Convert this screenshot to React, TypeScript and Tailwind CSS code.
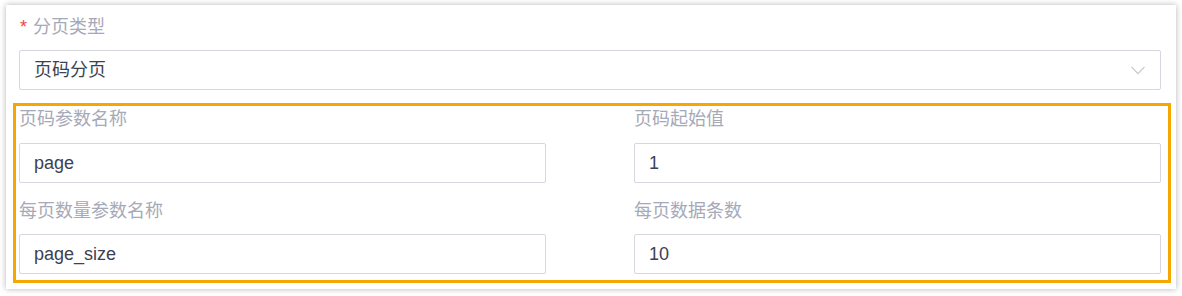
import React from "react"

const font = { fontFamily: '"Liberation Sans", "Noto Sans CJK SC", sans-serif' }

function Label({ children, required }: { children: React.ReactNode; required?: boolean }) {
  return (
    <div className="h-[26px] leading-[26px] text-[18px] text-[#a6a9b7] whitespace-nowrap">
      {required && <span className="text-[#f0463c] mr-[6px] ml-[1px]">*</span>}
      {children}
    </div>
  )
}

function Field({ value }: { value: string }) {
  return (
    <div className="h-[40px] border border-[#d6d7e0] rounded-[2px] pl-[14px] flex items-center text-[18px] text-[#3b4252] bg-white">
      {value}
    </div>
  )
}

export default function App() {
  return (
    <div className="w-[1182px] h-[296px] bg-white overflow-hidden" style={font}>
      <div className="ml-[6px] mt-[5px] w-[1170px] h-[284px] bg-white shadow-[0_0_6px_rgba(0,0,0,0.3)] pl-[13px] pr-[15px] pt-[9px]">
        <Label required>分页类型</Label>
        <div className="mt-[10px] h-[40px] border border-[#d6d7e0] rounded-[2px] pl-[14px] pr-[15px] flex items-center justify-between text-[18px] text-[#3b4252]">
          <span>页码分页</span>
          <svg width="14" height="9" viewBox="0 0 14 9" fill="none">
            <path d="M0.5 0.8 L7 7.6 L13.5 0.8" stroke="#c3c4cc" strokeWidth="1.1" />
          </svg>
        </div>

        <div className="relative mt-[16px]">
          <div className="absolute -left-[6px] -right-[10px] -top-[3px] -bottom-[9px] border-[3px] border-[#f7a800] pointer-events-none" />
          <div className="grid grid-cols-2 gap-x-[88px]">
            <div>
              <Label>页码参数名称</Label>
              <div className="mt-[11px]">
                <Field value="page" />
              </div>
            </div>
            <div>
              <Label>页码起始值</Label>
              <div className="mt-[11px]">
                <Field value="1" />
              </div>
            </div>
            <div className="mt-[15px]">
              <Label>每页数量参数名称</Label>
              <div className="mt-[10px]">
                <Field value="page_size" />
              </div>
            </div>
            <div className="mt-[15px]">
              <Label>每页数据条数</Label>
              <div className="mt-[10px]">
                <Field value="10" />
              </div>
            </div>
          </div>
        </div>
      </div>
    </div>
  )
}
